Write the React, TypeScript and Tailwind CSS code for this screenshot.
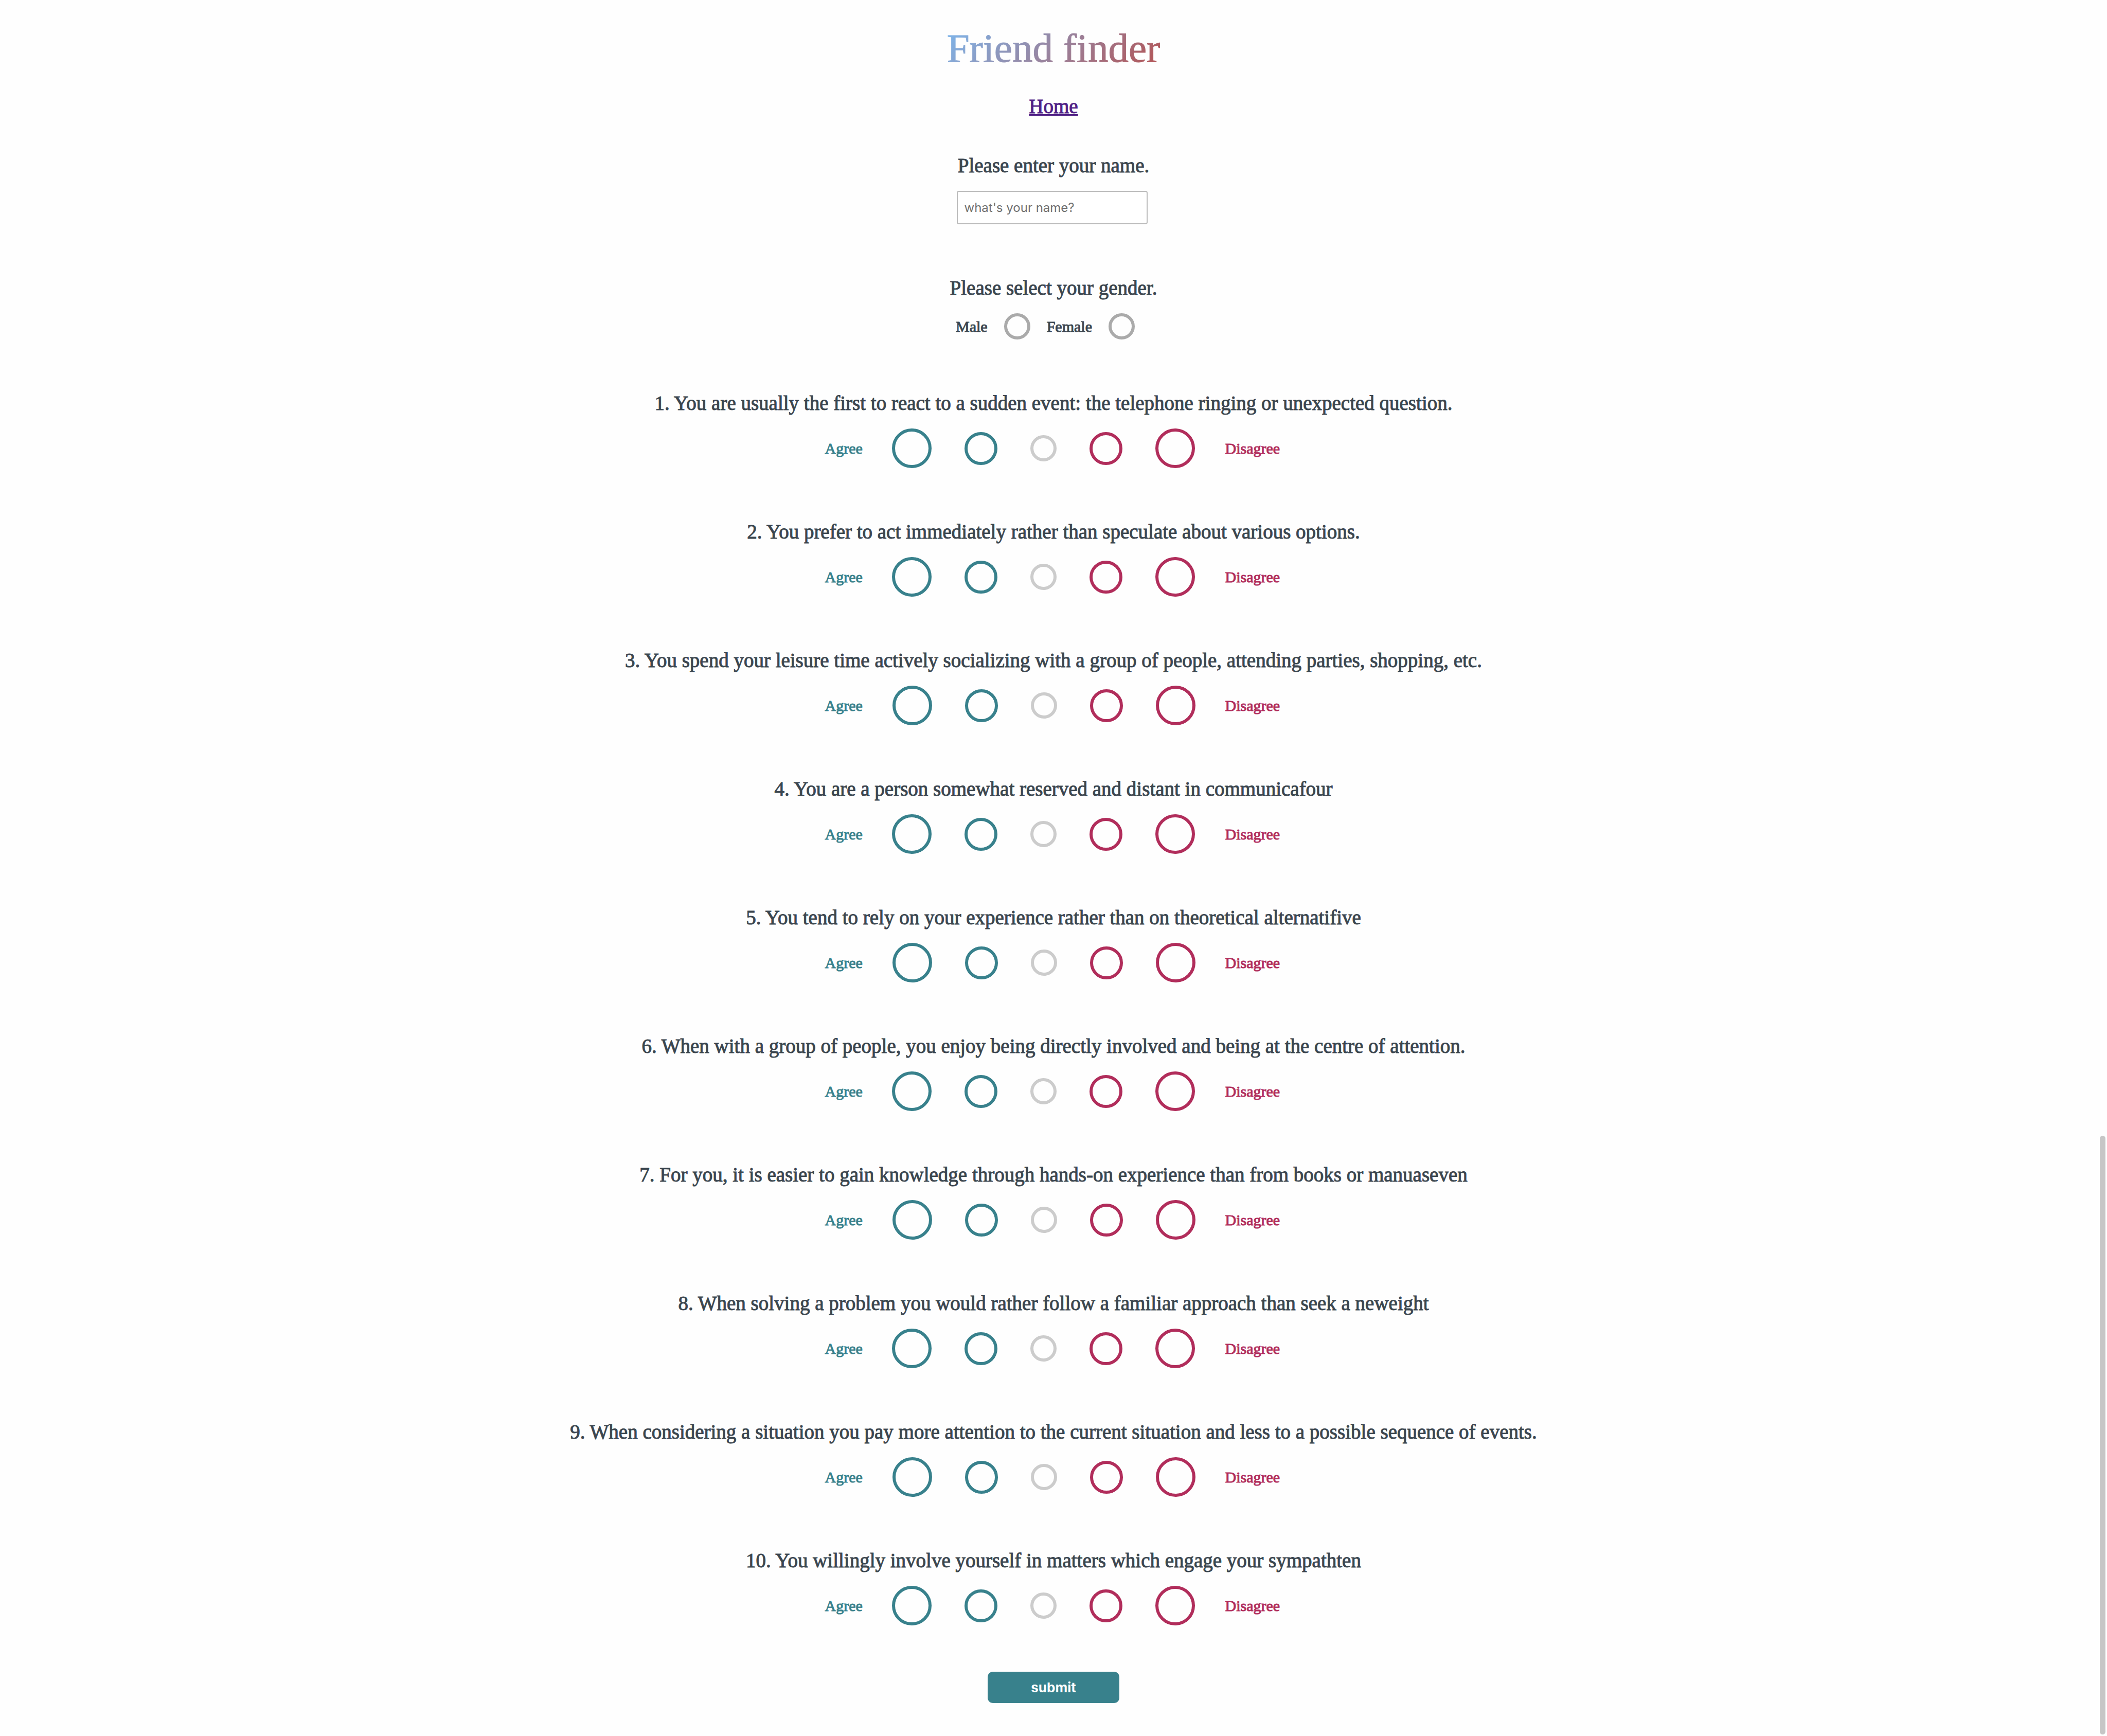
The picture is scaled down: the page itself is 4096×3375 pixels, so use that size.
import { useState } from "react";

const QUESTIONS = [
  "You are usually the first to react to a sudden event: the telephone ringing or unexpected question.",
  "You prefer to act immediately rather than speculate about various options.",
  "You spend your leisure time actively socializing with a group of people, attending parties, shopping, etc.",
  "You are a person somewhat reserved and distant in communicafour",
  "You tend to rely on your experience rather than on theoretical alternatifive",
  "When with a group of people, you enjoy being directly involved and being at the centre of attention.",
  "For you, it is easier to gain knowledge through hands-on experience than from books or manuaseven",
  "When solving a problem you would rather follow a familiar approach than seek a neweight",
  "When considering a situation you pay more attention to the current situation and less to a possible sequence of events.",
  "You willingly involve yourself in matters which engage your sympathten",
];

const CHOICES = [
  { label: "Strongly agree", style: "size-[77px] border-[#38818c] checked:bg-[#38818c]" },
  { label: "Agree", style: "size-[64px] border-[#38818c] checked:bg-[#38818c]" },
  { label: "Neutral", style: "size-[51px] border-[#cccccc] checked:bg-[#cccccc]" },
  { label: "Disagree", style: "size-[64px] border-[#b12d5b] checked:bg-[#b12d5b]" },
  { label: "Strongly disagree", style: "size-[77px] border-[#b12d5b] checked:bg-[#b12d5b]" },
];

const PROMPT = "text-[39px] leading-[52px] text-center [-webkit-text-stroke:1px]";

function Question({ number, text }: { number: number; text: string }) {
  const id = `question-${number}`;
  return (
    <div role="radiogroup" aria-labelledby={id} className="flex flex-col items-center gap-[23px]">
      <p id={id} className={PROMPT}>
        {number}. {text}
      </p>
      <div className="flex items-center gap-[58px] text-[30px] leading-10 [-webkit-text-stroke:1px]">
        <span className="w-[73px] text-[#38818c]">Agree</span>
        <div className="flex items-center gap-16">
          {CHOICES.map((choice, i) => (
            <input
              key={choice.label}
              type="radio"
              name={id}
              value={i + 1}
              aria-label={choice.label}
              className={`appearance-none cursor-pointer rounded-full border-[6px] ${choice.style}`}
            />
          ))}
        </div>
        <span className="w-[111px] text-[#b12d5b]">Disagree</span>
      </div>
    </div>
  );
}

export default function App() {
  const [name, setName] = useState("");
  return (
    <div className="min-h-screen bg-[#fefefe] pt-11 font-['Liberation_Serif',serif] text-[#3b464f]">
      <header className="flex flex-col items-center gap-[37px]">
        <h1 className="bg-[linear-gradient(135deg,#7cb8ef_0%,#b5504f_100%)] bg-clip-text text-[79px] leading-[100px] text-transparent [-webkit-text-stroke:1px_transparent]">
          Friend finder
        </h1>
        <a
          href="#home"
          className="text-[39px] leading-[52px] text-[#4f2085] underline decoration-[3px] underline-offset-2 [-webkit-text-stroke:1px]"
        >
          Home
        </a>
      </header>

      <form
        className="mt-[63px] flex flex-col items-center gap-[98px]"
        onSubmit={(e) => e.preventDefault()}
      >
        <div className="flex flex-col items-center gap-[23px]">
          <label htmlFor="name" className={PROMPT}>
            Please enter your name.
          </label>
          <input
            id="name"
            type="text"
            value={name}
            onChange={(e) => setName(e.target.value)}
            placeholder="what's your name?"
            className="mr-1.5 h-[65px] w-[371px] rounded-[4px] border-2 border-[#bbbbbb] bg-white px-[13px] font-['Inter',sans-serif] text-[24px] placeholder:text-[#707070]"
          />
        </div>

        <div role="radiogroup" aria-labelledby="gender" className="flex flex-col items-center gap-[23px]">
          <p id="gender" className={PROMPT}>
            Please select your gender.
          </p>
          <div className="flex items-center text-[30px] leading-10 [-webkit-text-stroke:1px]">
            {["Male", "Female"].map((g) => (
              <label key={g} className="flex items-center">
                {g}
                <input
                  type="radio"
                  name="gender"
                  value={g}
                  className="mx-8 size-[51px] cursor-pointer appearance-none rounded-full border-[6px] border-[#aaaaaa] checked:bg-[#aaaaaa]"
                />
              </label>
            ))}
          </div>
        </div>

        {QUESTIONS.map((text, i) => (
          <Question key={text} number={i + 1} text={text} />
        ))}

        <button
          type="submit"
          className="-mt-2 mb-16 h-[61px] w-64 cursor-pointer rounded-[10px] bg-[#38818c] font-['Inter',sans-serif] text-[26px] font-bold text-white"
        >
          submit
        </button>
      </form>

      {/* Overlay scrollbar thumb */}
      <div aria-hidden="true" className="fixed right-[3px] bottom-[3px] h-[1164px] w-[11px] rounded-full bg-[#c6c6c6]" />
    </div>
  );
}
